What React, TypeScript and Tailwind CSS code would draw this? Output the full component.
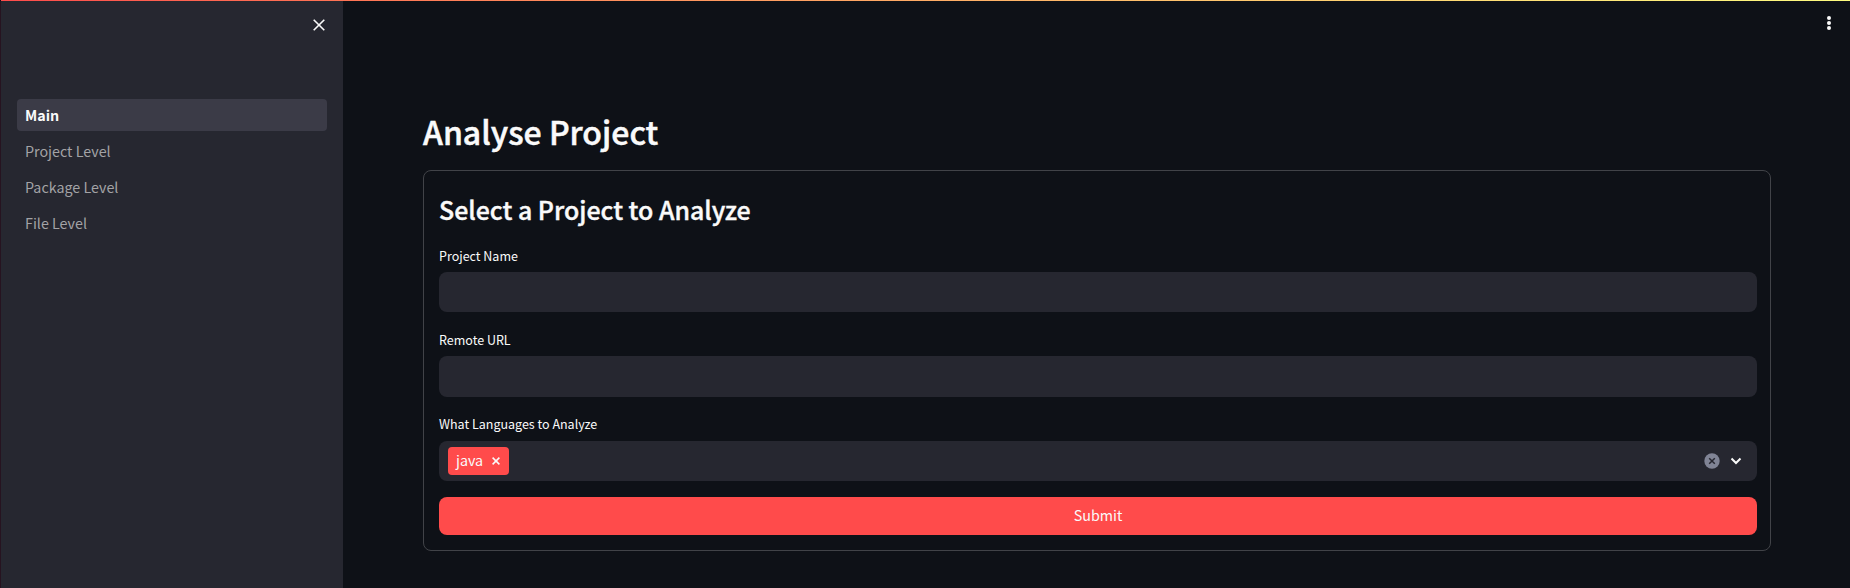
import React from "react";

const links = ["Project Level", "Package Level", "File Level"];

function Field({ label, first }: { label: string; first?: boolean }) {
  return (
    <label className="block">
      <span className="block h-7 pt-[2px] text-[12.5px] leading-5">{label}</span>
      <input
        className={
          first
            ? "block h-10 w-full rounded-lg bg-[#262730] px-3 text-sm outline-none"
            : "block h-[41px] w-full rounded-lg bg-[#262730] px-3 text-sm outline-none"
        }
      />
    </label>
  );
}

function Sidebar() {
  return (
    <aside className="flex w-[343px] shrink-0 flex-col border-l border-[#261320] bg-[#262730]">
      <div className="flex h-[98px] justify-end pt-[18px] pr-[18px]">
        <button aria-label="Close sidebar" className="h-3 w-3">
          <svg viewBox="0 0 12 12" className="h-3 w-3" stroke="#fafafa" strokeWidth="1.6">
            <path d="M.7.7 11.3 11.3M11.3.7.7 11.3" />
          </svg>
        </button>
      </div>
      <nav className="flex flex-col gap-1 px-4 text-[14.3px] leading-8">
        <a className="h-8 rounded bg-[#3b3b47] pl-2 font-bold text-[#fafafa]">Main</a>
        {links.map((name) => (
          <a key={name} className="h-8 rounded pl-2 text-[#a3a3a6]">
            {name}
          </a>
        ))}
      </nav>
    </aside>
  );
}

export default function App() {
  return (
    <div className="flex h-[588px] w-full flex-col overflow-hidden bg-[#0e1117] font-['Noto_Sans_CJK_SC',sans-serif] text-[#fafafa]">
      <div className="ml-px h-px shrink-0 bg-linear-to-r from-[#ff4b4b] to-[#fffd80]" />
      <div className="flex min-h-0 flex-1">
        <Sidebar />
        <div className="flex min-w-0 flex-1 flex-col">
          <header className="flex h-[98px] shrink-0 justify-end pt-[14px] pr-[18px]">
            <svg viewBox="0 0 6 16" className="h-4 w-[6px]" fill="#fafafa">
              <circle cx="3" cy="3" r="2" />
              <circle cx="3" cy="8" r="2" />
              <circle cx="3" cy="13" r="2" />
            </svg>
          </header>
          <main className="w-[1428px] pl-20">
            <h1 className="h-[71px] pt-[7px] text-[32px] leading-[50px] font-medium [-webkit-text-stroke:0.5px_#fafafa]">Analyse Project</h1>
            <form className="h-[381px] rounded-lg border border-[#414348] pt-[13px] pr-[13px] pl-[15px]" onSubmit={(e) => e.preventDefault()}>
              <h2 className="h-[60px] text-[24.93px] leading-[50px] font-medium [-webkit-text-stroke:0.4px_#fafafa]">Select a Project to Analyze</h2>
              <div className="flex flex-col gap-4">
                <Field label="Project Name" first />
                <Field label="Remote URL" />
                <div>
                  <span className="block h-7 pt-px text-[12.5px] leading-5">What Languages to Analyze</span>
                  <div className="flex h-10 items-center rounded-lg bg-[#262730] pr-[15px] pl-[9px]">
                    <span className="flex h-7 w-[61px] items-center rounded bg-[#ff4b4b] pl-2 text-[14.3px] leading-7">
                      <span className="mb-[3px]">java</span>
                      <svg viewBox="0 0 8 8" className="ml-[9px] h-2 w-2" stroke="#fafafa" strokeWidth="1.5">
                        <path d="M.6.6 7.4 7.4M7.4.6.6 7.4" />
                      </svg>
                    </span>
                    <svg viewBox="0 0 16 16" className="ml-auto h-4 w-4">
                      <circle cx="8" cy="8" r="7.7" fill="#808495" />
                      <path d="m5.2 5.2 5.6 5.6m0-5.6-5.6 5.6" stroke="#262730" strokeWidth="1.5" />
                    </svg>
                    <svg viewBox="0 0 12 8" className="ml-[10px] h-2 w-3" fill="none" stroke="#fafafa" strokeWidth="2">
                      <path d="m1.5 1.5 4.5 4.5 4.5-4.5" />
                    </svg>
                  </div>
                </div>
                <button className="flex h-[38px] justify-center rounded-lg bg-[#ff4b4b] text-[14.3px] leading-[35px]">Submit</button>
              </div>
            </form>
          </main>
        </div>
      </div>
    </div>
  );
}
